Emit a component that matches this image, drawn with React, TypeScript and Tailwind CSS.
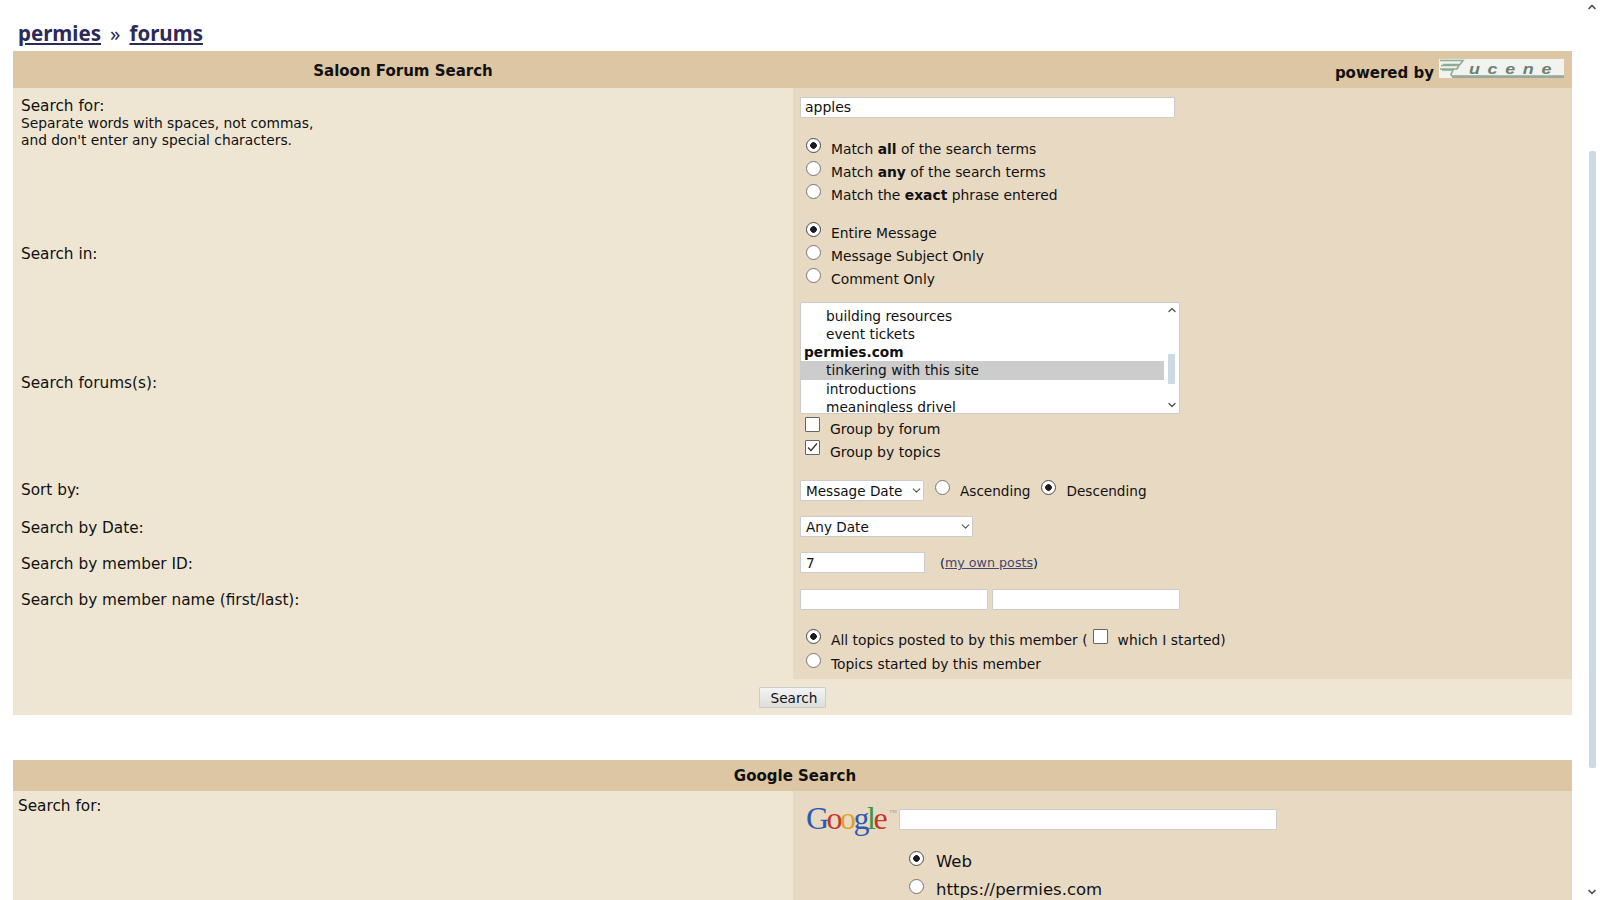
import React from "react";
import { ChevronDown, ChevronUp } from "lucide-react";

const radioCls =
  "appearance-none m-0 shrink-0 w-[15px] h-[15px] rounded-full border-[1.5px] border-[#767676] bg-white checked:border-[#4a4a4a] checked:bg-[radial-gradient(circle,#1c1c1c_0,#1c1c1c_3px,#ffffff_3.6px)]";
const fieldCls = "h-[21px] border border-[#cccccc] bg-white rounded-[1px] px-[5px] text-[13.6px] text-[#111] outline-none";

function RadioRow({ name, checked, children }: { name: string; checked?: boolean; children: React.ReactNode }) {
  return (
    <label className="flex h-[23px] items-center pl-[6px]">
      <input type="radio" name={name} defaultChecked={checked} className={`${radioCls} mb-[6px]`} />
      <span className="ml-[10px] mt-[2px] whitespace-nowrap text-[13.85px]">{children}</span>
    </label>
  );
}

function Box({ checked, className = "" }: { checked?: boolean; className?: string }) {
  return (
    <span className={`relative inline-flex w-[15px] h-[15px] shrink-0 ${className}`}>
      <input
        type="checkbox"
        defaultChecked={checked}
        className="appearance-none m-0 w-[15px] h-[15px] border-[1.5px] border-[#666] bg-white rounded-[1px]"
      />
      {checked && (
        <svg viewBox="0 0 15 15" className="absolute inset-0 w-[15px] h-[15px]" fill="none" stroke="#333" strokeWidth="1.3">
          <path d="M3 7.5 L6 10.5 L12 3.5" />
        </svg>
      )}
    </span>
  );
}

function Row({ h, label, labelCls = "items-center pt-[2px]", children }: { h: string; label: React.ReactNode; labelCls?: string; children: React.ReactNode }) {
  return (
    <div className={`flex ${h}`}>
      <div className={`flex w-[780px] shrink-0 bg-[#efe5d3] pl-[8px] ${labelCls}`}>{label}</div>
      <div className="flex-1 bg-[#e8d9c3] pl-[7px]">{children}</div>
    </div>
  );
}

function SelectBox({ value, className }: { value: string; className: string }) {
  return (
    <div className={`flex items-center justify-between ${fieldCls} ${className}`}>
      <span className="mt-[2px] whitespace-nowrap">{value}</span>
      <ChevronDown size={13} strokeWidth={2} className="mr-[-5px] text-[#555]" />
    </div>
  );
}

function LuceneLogo() {
  return (
    <div className="h-[19px] w-[125px] bg-[#f1f3ef]">
      <svg viewBox="0 0 125 19" className="block h-[19px] w-[125px]">
        <path d="M1 1.5 H24 L21 5.5 H4 M2 6.5 H20 L18 10 H1 M3 11 H14 L12 15.5 Q12 17 15 17 H125" fill="none" stroke="#8fab94" strokeWidth="1.6" />
        <path d="M13 18.2 H125" stroke="#7a837e" strokeWidth="1" />
        <text
          x="30"
          y="15"
          fontFamily="'Liberation Sans', sans-serif"
          fontStyle="italic"
          fontSize="14"
          letterSpacing="6"
          fill="#6c7f72"
          textLength="90"
          lengthAdjust="spacingAndGlyphs"
        >
          ucene
        </text>
      </svg>
    </div>
  );
}

function GoogleLogo() {
  return (
    <div className="flex w-[87px] items-start font-['Liberation_Serif',serif] text-[32px] leading-[28px] tracking-[-2.5px]">
      <span className="text-[#2a5ab5]">G</span>
      <span className="text-[#c8362a]">o</span>
      <span className="text-[#d9a51f]">o</span>
      <span className="text-[#2a5ab5]">g</span>
      <span className="text-[#3a9440]">l</span>
      <span className="text-[#c8362a]">e</span>
      <span className="ml-[4px] mt-[5px] text-[5px] leading-[6px] tracking-normal text-[#999]">TM</span>
    </div>
  );
}

export default function App() {
  return (
    <div className="flex h-screen overflow-hidden bg-white font-['DejaVu_Sans','Liberation_Sans',sans-serif] text-[15.3px] text-[#111]">
      <main className="flex-1 pl-[13px] pr-[12px]">
        <h1 className="flex h-[51px] items-end pb-[3px] pl-[5px] font-['Noto_Sans',sans-serif] text-[20.5px] leading-[30px] font-bold text-[#2b2a59]">
          <a className="underline">permies</a>
          <span className="mx-[9px] font-normal">»</span>
          <a className="underline">forums</a>
        </h1>

        <section>
          <div className="flex h-[37px] items-center bg-[#dcc6a4] text-[15px] font-bold">
            <div className="mt-[3px] w-[780px] shrink-0 text-center">Saloon Forum Search</div>
            <div className="flex flex-1 items-start justify-end pr-[8px]">
              <span className="mt-[7px] mr-[5px]">powered by</span>
              <div className="mt-[4px]">
                <LuceneLogo />
              </div>
            </div>
          </div>

          <Row
            h="h-[127px]"
            labelCls="items-start pt-[9px]"
            label={
              <div>
                <div className="leading-[18px]">Search for:</div>
                <div className="text-[13.8px] leading-[17px]">
                  Separate words with spaces, not commas,
                  <br />
                  and don't enter any special characters.
                </div>
              </div>
            }
          >
            <div className="pt-[9px]">
              <input defaultValue="apples" className={`${fieldCls} block w-[375px] pl-[4px] text-[14px]`} />
              <div className="pt-[19px]">
                <RadioRow name="terms" checked>Match <b>all</b> of the search terms</RadioRow>
                <RadioRow name="terms">Match <b>any</b> of the search terms</RadioRow>
                <RadioRow name="terms">Match the <b>exact</b> phrase entered</RadioRow>
              </div>
            </div>
          </Row>

          <Row h="h-[76px]" label="Search in:">
            <div className="pt-[6px]">
              <RadioRow name="in" checked>Entire Message</RadioRow>
              <RadioRow name="in">Message Subject Only</RadioRow>
              <RadioRow name="in">Comment Only</RadioRow>
            </div>
          </Row>

          <Row h="h-[182px]" label="Search forums(s):">
            <div className="pt-[11px]">
              <div className="flex h-[112px] w-[380px] overflow-hidden rounded-[2px] border border-[#cccccc] bg-white text-[13.75px] leading-[18px]">
                <div className="w-[363px] shrink-0 pt-[4px]">
                  <div className="pl-[25px]">building resources</div>
                  <div className="pl-[25px]">event tickets</div>
                  <div className="pl-[3px] font-bold">permies.com</div>
                  <div className="bg-[#cccccc] pl-[25px] leading-[19px]">tinkering with this site</div>
                  <div className="pl-[25px]">introductions</div>
                  <div className="pl-[25px]">meaningless drivel</div>
                </div>
                <div className="flex flex-1 flex-col items-center">
                  <ChevronUp size={12} strokeWidth={2.8} className="mt-[1px] text-[#555]" />
                  <div className="mt-[38px] h-[30px] w-[7px] rounded-[1px] bg-[#cdd9e5]" />
                  <ChevronDown size={12} strokeWidth={2.8} className="mt-[15px] text-[#555]" />
                </div>
              </div>
              <div className="pt-[3px] text-[14px]">
                <label className="flex h-[23px] items-center pl-[5px]">
                  <Box className="mb-[8px]" />
                  <span className="ml-[10px] mt-[1px]">Group by forum</span>
                </label>
                <label className="flex h-[23px] items-center pl-[5px]">
                  <Box checked className="mb-[8px]" />
                  <span className="ml-[10px] mt-[1px]">Group by topics</span>
                </label>
              </div>
            </div>
          </Row>

          <Row h="h-[34px]" label="Sort by:" labelCls="items-center">
            <div className="flex items-start pt-[7px] text-[13.6px]">
              <SelectBox value="Message Date" className="w-[124px]" />
              <input type="radio" name="dir" className={`${radioCls} ml-[11px]`} />
              <span className="ml-[10px] mt-[1px]">Ascending</span>
              <input type="radio" name="dir" defaultChecked className={`${radioCls} ml-[10px]`} />
              <span className="ml-[11px] mt-[1px]">Descending</span>
            </div>
          </Row>

          <Row h="h-[39px]" label="Search by Date:" labelCls="items-center pt-[4px]">
            <div className="pt-[9px]">
              <SelectBox value="Any Date" className="w-[173px]" />
            </div>
          </Row>

          <Row h="h-[35px]" label="Search by member ID:">
            <div className="flex items-center pt-[6px]">
              <input defaultValue="7" className={`${fieldCls} w-[125px]`} />
              <span className="ml-[15px] text-[12.7px]">
                (<a className="text-[#45456e] underline">my own posts</a>)
              </span>
            </div>
          </Row>

          <Row h="h-[98px]" labelCls="items-start pt-[8px]" label="Search by member name (first/last):">
            <div className="flex gap-[4px] pt-[8px]">
              <input className={`${fieldCls} w-[188px]`} />
              <input className={`${fieldCls} w-[188px]`} />
            </div>
            <div className="pt-[17.5px]">
              <RadioRow name="member" checked>
                <span className="inline-flex items-center">
                  All topics posted to by this member (
                  <Box className="mb-[8px] ml-[5px]" />
                  <span className="ml-[10px]">which I started)</span>
                </span>
              </RadioRow>
              <div className="mt-[1px]">
                <RadioRow name="member">Topics started by this member</RadioRow>
              </div>
            </div>
          </Row>

          <div className="flex h-[36px] items-center justify-center bg-[#efe5d3] pt-[1px]">
            <button className="h-[21px] w-[67px] rounded-[1px] border border-[#cccccc] bg-gradient-to-b from-[#f4f4f4] to-[#dddddd] pl-[3px] text-[13.7px] leading-[18px] text-[#111]">
              Search
            </button>
          </div>
        </section>

        <section className="mt-[45px]">
          <div className="flex h-[31px] items-center justify-center bg-[#dcc6a4] pl-[5px] pt-[2px] text-[15px] font-bold">Google Search</div>
          <div className="flex h-[200px]">
            <div className="w-[780px] shrink-0 bg-[#efe5d3] pl-[5px] pt-[4px]">Search for:</div>
            <div className="flex-1 bg-[#e8d9c3]">
              <div className="flex items-start pl-[13px] pt-[13px]">
                <GoogleLogo />
                <input className={`${fieldCls} mt-[5px] ml-[6px] w-[378px]`} />
              </div>
              <div className="pl-[116px] pt-[16px] text-[16.5px]">
                <label className="flex h-[28px] items-center">
                  <input type="radio" name="site" defaultChecked className={`${radioCls} mb-[7px]`} />
                  <span className="ml-[12px]">Web</span>
                </label>
                <label className="flex h-[28px] items-center">
                  <input type="radio" name="site" className={`${radioCls} mb-[7px]`} />
                  <span className="ml-[12px]">https://permies.com</span>
                </label>
              </div>
            </div>
          </div>
        </section>
      </main>

      <aside className="flex h-screen w-[16px] shrink-0 flex-col items-center">
        <ChevronUp size={12} strokeWidth={3.4} className="mt-[1px] text-[#505050]" />
        <div className="mt-[138px] h-[617px] w-[7px] rounded-[2px] bg-[#cdd9e5]" />
        <ChevronDown size={12} strokeWidth={3.4} className="mt-[118px] text-[#505050]" />
      </aside>
    </div>
  );
}
